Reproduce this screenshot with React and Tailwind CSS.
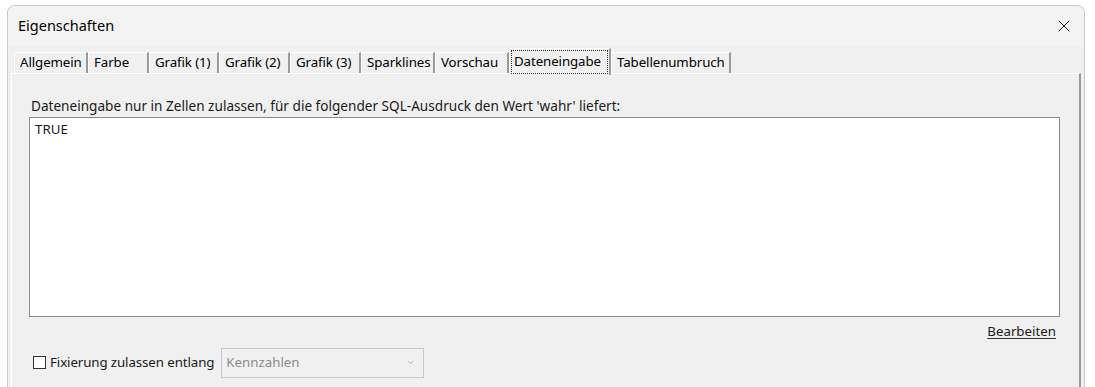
import React from 'react';
import { X, ChevronDown } from 'lucide-react';

const tabs = [
  { label: 'Allgemein', w: 'w-[74px]' },
  { label: 'Farbe', w: 'w-[61px]' },
  { label: 'Grafik (1)', w: 'w-[70px]' },
  { label: 'Grafik (2)', w: 'w-[71px]' },
  { label: 'Grafik (3)', w: 'w-[71px]' },
  { label: 'Sparklines', w: 'w-[74px]' },
  { label: 'Vorschau', w: 'w-[74px]' },
  { label: 'Dateneingabe', w: 'w-[102px]', active: true },
  { label: 'Tabellenumbruch', w: 'w-[120px]' },
];

const font = { fontFamily: '"Noto Sans", "Open Sans", sans-serif' };

const App = () => {
  return (
    <div className="w-[1095px] h-[387px] bg-white pt-[5px] pl-[7px] pr-[10px] overflow-hidden text-[#1a1a1a]" style={font}>
      <div className="h-[400px] flex flex-col border border-b-0 border-[#c9c9c9] rounded-t-[8px] bg-[#f0f0f0] overflow-hidden">
        {/* title bar */}
        <div className="h-[40px] flex items-center justify-between pl-[10px] pr-[10px] bg-[#f3f3f3] shrink-0">
          <span className="text-[14.5px] text-black">Eigenschaften</span>
          <X className="w-[20px] h-[20px] text-[#222]" strokeWidth={1.2} />
        </div>

        {/* tab strip */}
        <div className="flex items-end pl-[6px] h-[27px] shrink-0 relative z-10">
          {tabs.map((t) =>
            t.active ? (
              <div
                key={t.label}
                className={`${t.w} h-[27px] -mb-[2px] border-l border-t border-white border-r-2 border-r-[#9a9a9a] bg-[#f0f0f0] p-[1px]`}
              >
                <div className="h-full border border-dotted border-[#333] flex items-center pl-[2px] text-[13.3px] tracking-[-0.1px] text-black whitespace-nowrap">
                  {t.label}
                </div>
              </div>
            ) : (
              <div
                key={t.label}
                className={`${t.w} h-[21px] border-l border-t border-white border-r-2 border-r-[#9a9a9a] flex items-center pl-[5px] text-[13.3px] tracking-[-0.1px] text-black whitespace-nowrap`}
              >
                {t.label}
              </div>
            )
          )}
        </div>

        {/* tab panel */}
        <div className="flex-1 ml-[3px] mr-[3px] border-t border-l border-white border-r-2 border-r-[#9a9a9a] bg-[#f0f0f0] flex flex-col pl-[17px] pr-[19px]">
          <div className="h-[43px] flex items-end pb-[1px] pl-[2px] text-[13.6px] whitespace-nowrap">
            Dateneingabe nur in Zellen zulassen, für die folgender SQL-Ausdruck den Wert 'wahr' liefert:
          </div>
          <div className="h-[200px] bg-white border border-[#8a8a8a] px-[5px] pt-[2px] text-[13.3px]">
            TRUE
          </div>
          <div className="flex justify-end pr-[4px] mt-[5px]">
            <span className="text-[13.3px] underline underline-offset-2 decoration-[#333]">Bearbeiten</span>
          </div>
          <div className="flex items-center mt-[6px] pl-[4px]">
            <div className="w-[13px] h-[13px] border border-[#333] bg-white" />
            <span className="ml-[4px] text-[13.3px] tracking-[-0.1px]">Fixierung zulassen entlang</span>
            <div className="ml-[7px] w-[203px] h-[30px] border border-[#c8c8c8] bg-[#f0f0f0] flex items-center justify-between pl-[4px] pr-[8px]">
              <span className="text-[13.3px] text-[#8c8c8c]">Kennzahlen</span>
              <ChevronDown className="w-[9px] h-[9px] text-[#9a9a9a]" strokeWidth={2} />
            </div>
          </div>
        </div>
      </div>
    </div>
  );
};

export default App;
